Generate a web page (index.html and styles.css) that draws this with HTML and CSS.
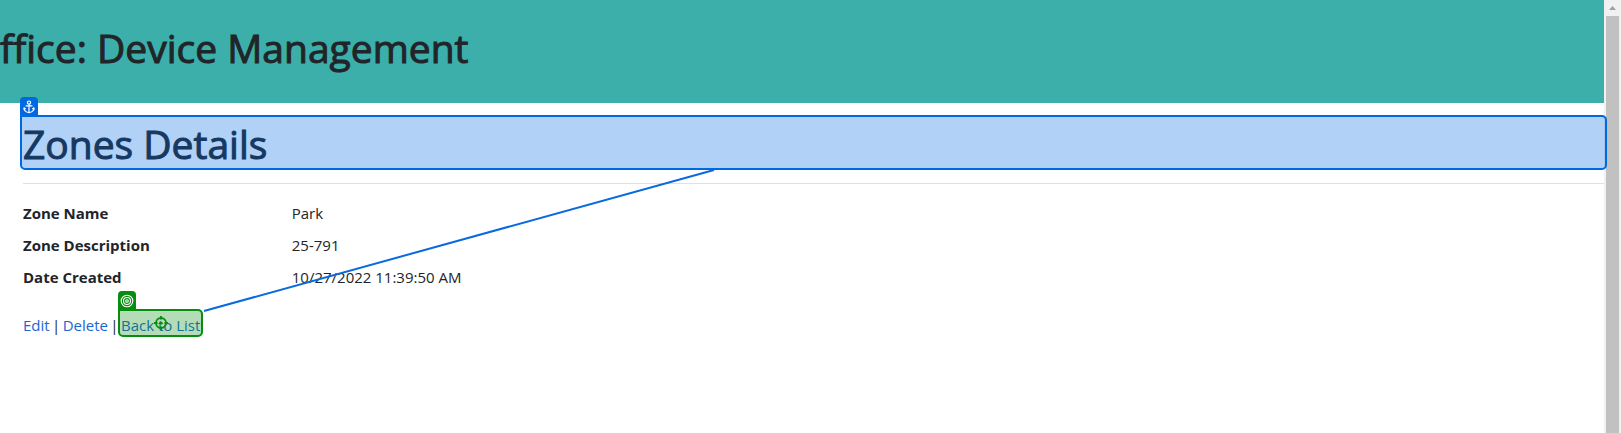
FILE: index.html
```html
<!DOCTYPE html>
<html lang="en">
<head>
<meta charset="utf-8">
<title>Zones Details</title>
<link rel="stylesheet" href="styles.css">
</head>
<body>
<div class="page">
  <header class="banner"><div class="banner-title">ffice: Device Management</div></header>
  <main class="content">
    <h1 class="title">Zones Details
      <span class="mark mark-anchor">
        <span class="tab">
          <svg width="12" height="14" viewBox="0 0 12 14" fill="none" stroke="#fff" stroke-width="1.2"><circle cx="6" cy="2.6" r="1.6"/><path d="M6 4.2V12M2.6 5.8H9.4" /><path d="M1 8.2C1.2 10.8 3.2 12.2 6 12.6C8.800 12.2 10.800 10.800 11 8.200M.6 9.400L1.200 8L2.700 9M11.400 9.400L10.800 8L9.300 9"/></svg>
        </span>
      </span>
    </h1>
    <hr class="rule">
    <dl class="details">
      <dt>Zone Name</dt><dd>Park</dd>
      <dt>Zone Description</dt><dd>25-791</dd>
      <dt>Date Created</dt><dd>10/27/2022 11:39:50 AM</dd>
    </dl>
    <nav class="actions">
      <a href="#edit">Edit</a><span class="bar">|</span><a href="#delete">Delete</a><span class="bar">|</span>
      <a class="back" href="#list">Back to List
        <span class="mark mark-target">
          <span class="tab">
            <svg width="14" height="14" viewBox="0 0 14 14" fill="none" stroke="#fff" stroke-width="1.1"><circle cx="7" cy="7" r="5.800"/><circle cx="7" cy="7" r="3.500"/><circle cx="7" cy="7" r="1.300"/></svg>
          </span>
          <svg class="crosshair" width="16" height="16" viewBox="0 0 16 16" fill="none" stroke="#078d0f" stroke-width="1.800"><circle cx="8" cy="8" r="5"/><path d="M8 1V4.500M8 11.500V15M1 8H4.500M11.500 8H15"/><circle cx="8" cy="8" r="1.600" fill="#078d0f" stroke="none"/></svg>
        </span>
      </a>
    </nav>
  </main>
  <svg class="connector" width="720" height="320" viewBox="0 0 720 320"><path d="M204 311L714 170" fill="none" stroke="#0969e0" stroke-width="2"/></svg>
</div>
<div class="scrollbar" aria-hidden="true">
  <svg class="scroll-up" width="7" height="4" viewBox="0 0 7 4"><path d="M0 4L3.500 0L7 4Z" fill="#a0a0a0"/></svg>
  <div class="thumb"></div>
</div>
</body>
</html>
```
FILE: styles.css
```css
* { box-sizing: border-box; }
body {
  margin: 0;
  min-height: 100vh;
  display: flex;
  overflow: hidden;
  background: #fff;
  color: #212529;
  font: 15px/24px "Segoe UI", "Open Sans", "Noto Sans", sans-serif;
}
.page { flex: 1; position: relative; z-index: 1; }
.banner {
  height: 103px;
  padding-top: 23px;
  background: #3cafab;
}
.banner-title, .title {
  font-size: 39px;
  font-weight: 500;
  line-height: 50px;
  white-space: nowrap;
  -webkit-text-stroke: 1px currentColor;
}
.content { padding: 16px 0 0 23px; }
.title { position: relative; margin: 0; }
.mark {
  position: absolute;
  border: 2px solid;
  border-radius: 5px;
}
.mark-anchor {
  inset: -4px -3px -1px;
  border-color: #0068e0;
  border-top-left-radius: 0;
  background: rgba(0, 104, 224, 0.3);
}
.mark-target {
  inset: -4px -3px 0;
  border-color: #078d0f;
  border-top-left-radius: 0;
  background: rgba(7, 141, 15, 0.3);
}
.tab {
  position: absolute;
  left: -2px;
  bottom: 100%;
  width: 18px;
  height: 20px;
  display: flex;
  align-items: center;
  justify-content: center;
  border-radius: 4px 4px 0 0;
}
.mark-anchor .tab { background: #0068e0; }
.mark-target .tab { background: #078d0f; }
.crosshair {
  position: absolute;
  inset: 0;
  margin: auto;
}
.rule {
  height: 1px;
  margin: 14px 0 17px;
  border: 0;
  background: #e0e0e0;
}
.details {
  margin: 0 0 16px;
  display: grid;
  grid-template-columns: 17% 1fr;
}
.details dt { font-weight: 700; }
.details dd, .details dt { margin: 0 0 8px; }
.actions { display: flex; gap: 4px; }
.actions a { color: #1b66d2; text-decoration: none; }
.bar {
  width: 5px;
  display: flex;
  justify-content: center;
}
.back { position: relative; }
.connector {
  position: absolute;
  top: 0;
  left: 0;
  pointer-events: none;
}
.scrollbar {
  width: 17px;
  padding: 6px 2px 0;
  display: flex;
  flex-direction: column;
  align-items: center;
  gap: 6px;
  background: #f1f1f1;
}
.scroll-up { flex: none; }
.thumb {
  flex: 1;
  width: 100%;
  background: #c1c1c1;
}
```
